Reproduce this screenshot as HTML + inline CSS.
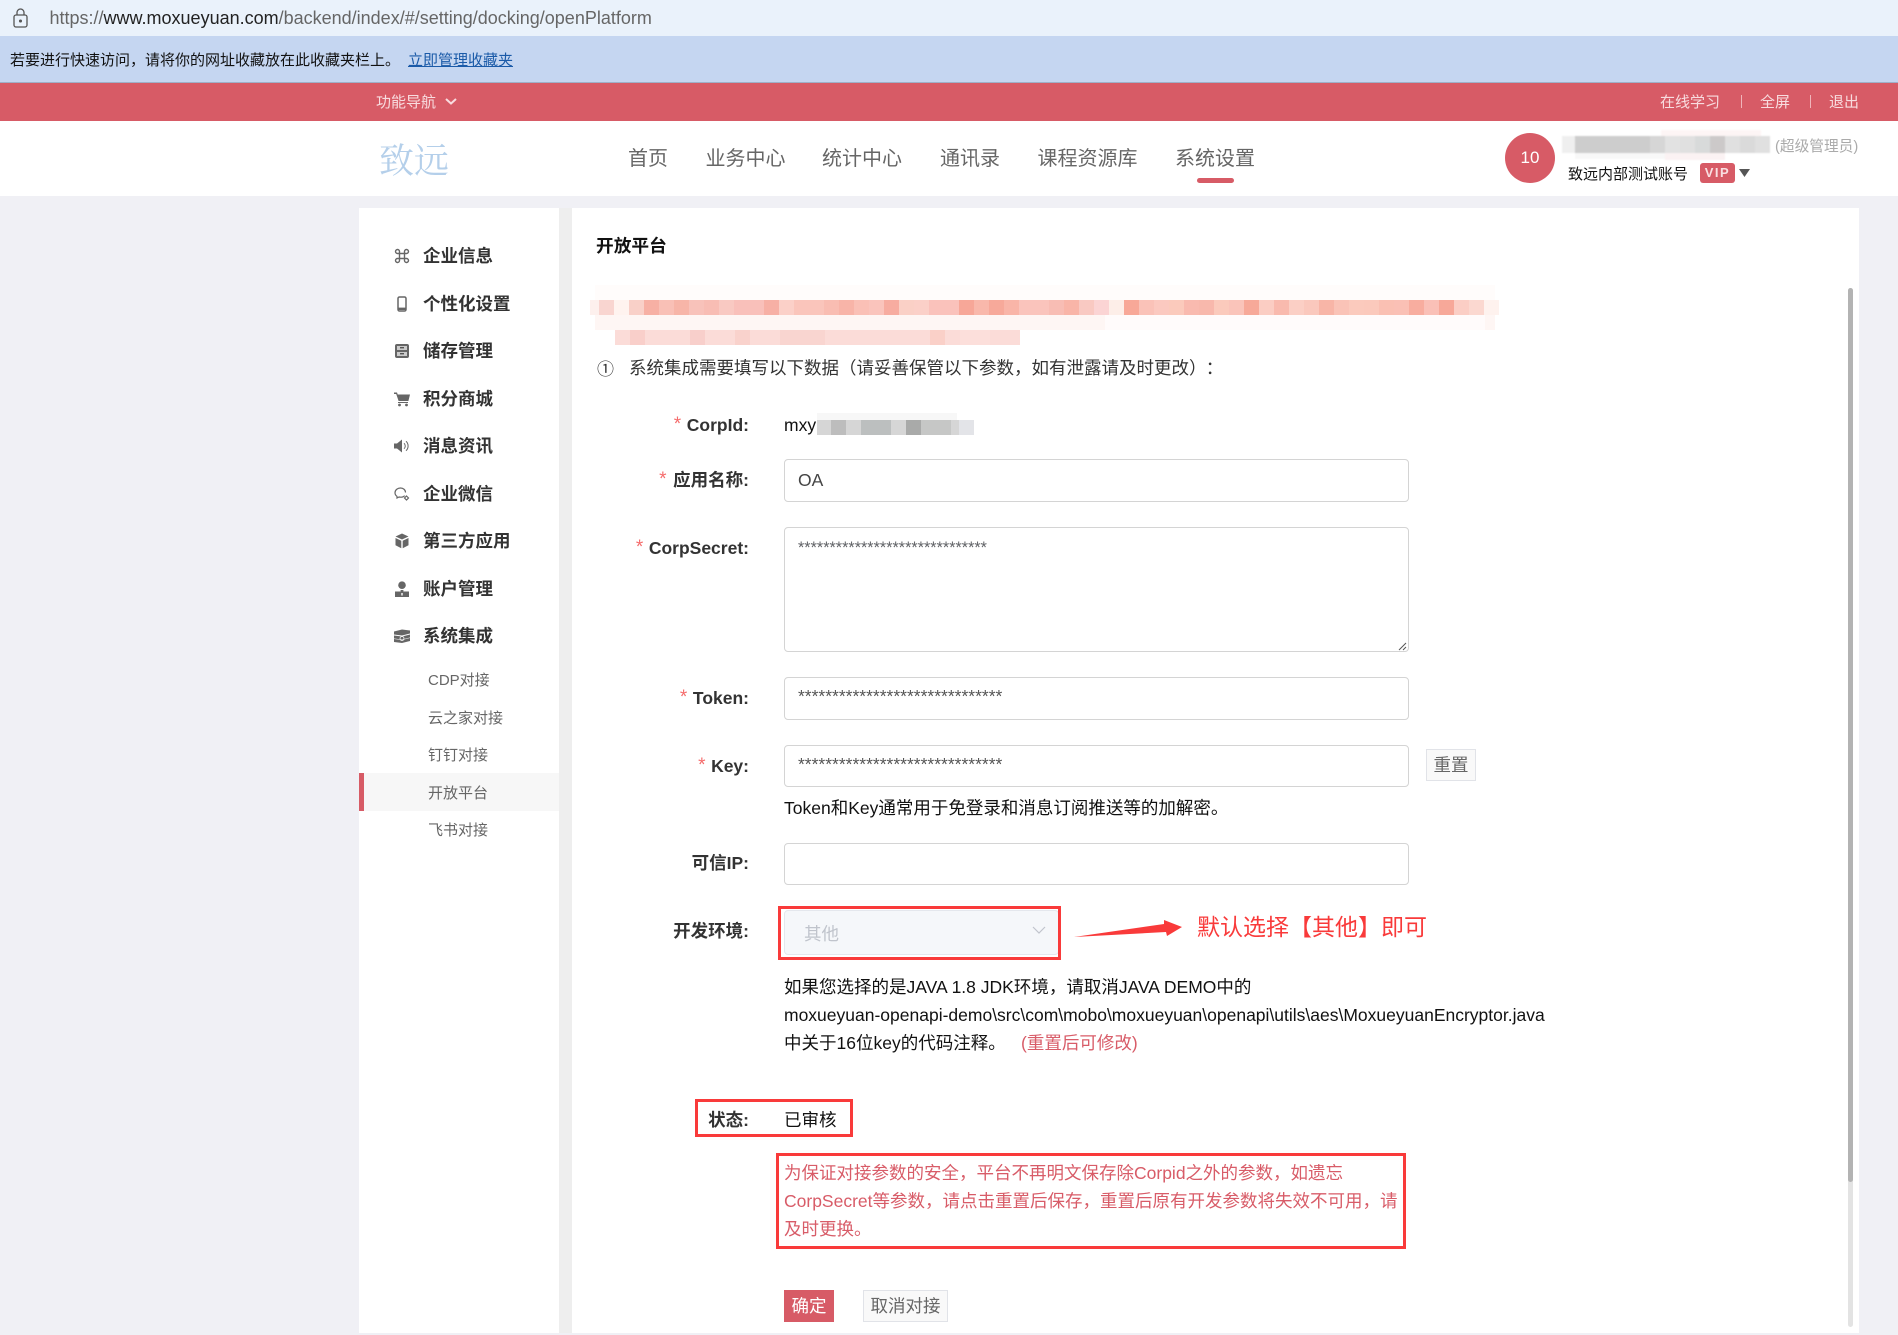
<!DOCTYPE html>
<html lang="zh"><head><meta charset="utf-8"><title>开放平台</title>
<style>
*{box-sizing:border-box;margin:0;padding:0}
html,body{width:1898px;height:1335px;overflow:hidden;background:#f0f0f5}
body{position:relative;font-family:"Liberation Sans","Noto Sans CJK SC",sans-serif;color:#000}
.a{position:absolute}
.t{position:absolute;white-space:nowrap;line-height:24px}
.m{font-size:17.5px;font-weight:700;color:#333;left:423px}
.s{font-size:15px;color:#666;left:428px}
.n{font-size:20px;color:#666;top:147px}
.l{font-size:17.5px;font-weight:700;color:#333;text-align:right;right:1149px}
.l i{position:absolute;font-style:normal;font-weight:400;color:#f56c6c;font-size:19px;top:0}
.v{font-size:17.5px;left:784px;color:#111}
.in{position:absolute;left:784px;width:625px;background:#fff;border:1.5px solid #d4d4d4;border-radius:4px}
.w{font-size:15px;color:#f8dcdf;top:90.5px}
.r{position:absolute;border:3px solid #f93a3a}
.ic{position:absolute;left:394px;width:16px;height:16px}
.e{font-size:17.5px;color:#d85c68;left:784px}
</style></head><body>

<!-- browser address bar -->
<div class="a" style="left:0;top:0;width:1898px;height:36px;background:#eaf2fb"></div>
<svg class="a" style="left:12px;top:8px" width="17" height="20" viewBox="0 0 17 20" fill="none" stroke="#555" stroke-width="1.3"><rect x="2" y="7" width="13" height="12" rx="2"/><path d="M5 7V4.5a3.5 3.5 0 0 1 7 0V7"/><circle cx="8.5" cy="13" r=".9" fill="#555"/></svg>
<div class="t" style="left:49.5px;top:6px;font-size:18px;color:#666">https://<span style="color:#222">www.moxueyuan.com</span>/backend/index/#/setting/docking/openPlatform</div>

<!-- favorites bar -->
<div class="a" style="left:0;top:36px;width:1898px;height:47px;background:#c5d6f1;border-bottom:1px solid #9fb0c8"></div>
<div class="t" style="left:10px;top:48.5px;font-size:15px;color:#111">若要进行快速访问，请将你的网址收藏放在此收藏夹栏上。</div>
<div class="t" style="left:408px;top:48.5px;font-size:15px;color:#1a5aa8;text-decoration:underline">立即管理收藏夹</div>

<!-- red bar -->
<div class="a" style="left:0;top:83px;width:1898px;height:38px;background:#d75b66"></div>
<div class="t w" style="left:376px">功能导航</div>
<svg class="a" style="left:444px;top:97px" width="14" height="9" viewBox="0 0 14 9" fill="none" stroke="#f8dcdf" stroke-width="2"><path d="M2 2l5 4.5L12 2"/></svg>
<div class="t w" style="left:1660px">在线学习</div>
<div class="a" style="left:1741px;top:95px;width:1px;height:13px;background:#f0b5bb"></div>
<div class="t w" style="left:1760px">全屏</div>
<div class="a" style="left:1810px;top:95px;width:1px;height:13px;background:#f0b5bb"></div>
<div class="t w" style="left:1829px">退出</div>

<!-- header -->
<div class="a" style="left:0;top:121px;width:1898px;height:75px;background:#fff"></div>
<div class="t" style="left:379px;top:146px;line-height:32px;font-size:35px;color:#b4cfea;font-family:'Liberation Serif','Noto Serif CJK SC',serif">致远</div>
<div class="t n" style="left:628px">首页</div>
<div class="t n" style="left:705.5px">业务中心</div>
<div class="t n" style="left:822px">统计中心</div>
<div class="t n" style="left:940px">通讯录</div>
<div class="t n" style="left:1037.5px">课程资源库</div>
<div class="t n" style="left:1175px">系统设置</div>
<div class="a" style="left:1197px;top:178px;width:37px;height:5px;border-radius:3px;background:#d75b66"></div>

<div class="a" style="left:1505px;top:133px;width:50px;height:50px;border-radius:50%;background:#d75b66;color:#fff;font-size:17px;line-height:50px;text-align:center">10</div>
<svg class="a" style="left:1561px;top:130px;filter:blur(.8px)" width="216" height="30" shape-rendering="crispEdges">
<rect x="1" y="6" width="208" height="17" fill="#efefef"/>
<rect x="14" y="6" width="75" height="17" fill="#cdcdcd"/><rect x="89" y="6" width="15" height="17" fill="#d6d6d6"/><rect x="104" y="6" width="15" height="17" fill="#e2e2e2"/><rect x="119" y="6" width="15" height="17" fill="#e0e0e0"/><rect x="134" y="6" width="15" height="17" fill="#d8dada"/><rect x="149" y="6" width="15" height="17" fill="#ccc9c9"/><rect x="164" y="6" width="15" height="17" fill="#e0e0e0"/><rect x="179" y="6" width="15" height="17" fill="#dadada"/><rect x="194" y="6" width="15" height="17" fill="#e0e0e0"/>
<rect x="100" y="0" width="100" height="6" fill="#fdf5f5"/><rect x="14" y="23" width="90" height="6" fill="#f8f8f8"/><rect x="104" y="23" width="60" height="7" fill="#fbf2f3"/>
</svg>
<div class="t" style="left:1775px;top:135px;font-size:14.7px;color:#aaa">(超级管理员)</div>
<div class="t" style="left:1568px;top:162.500px;font-size:15px;color:#111">致远内部测试账号</div>
<div class="a" style="left:1700px;top:163px;width:35px;height:20px;border-radius:3px;background:#d75b66;color:#f9dfe1;font-size:13px;font-weight:700;letter-spacing:1.5px;line-height:20px;text-align:center">VIP</div>
<svg class="a" style="left:1739px;top:169px" width="11" height="8"><path d="M0 0h11L5.500 8z" fill="#555"/></svg>

<!-- sidebar -->
<div class="a" style="left:359px;top:208px;width:200px;height:1125px;background:#fff"></div>
<div class="a" style="left:559px;top:208px;width:13px;height:1125px;background:#eee"></div>
<div class="a" style="left:359px;top:773px;width:200px;height:38px;background:#f7f7f7"></div>
<div class="a" style="left:359px;top:773px;width:5px;height:38px;background:#d75b66"></div>

<svg class="ic" style="top:248px" viewBox="0 0 16 16" fill="none" stroke="#666" stroke-width="1.4"><path d="M5.500 5.500h5v5h-5zM5.500 5.500V3.700A2 2 0 1 0 3.700 5.500H5.500M10.500 5.500V3.700A2 2 0 1 1 12.300 5.500H10.500M5.500 10.500V12.300A2 2 0 1 1 3.700 10.500H5.500M10.500 10.500V12.300A2 2 0 1 0 12.300 10.500H10.500"/></svg>
<svg class="ic" style="top:296px" viewBox="0 0 16 16" fill="none" stroke="#666" stroke-width="1.5"><rect x="4" y="1" width="8" height="14" rx="1.500"/><path d="M4 12.800h8" stroke-width="2.400"/></svg>
<svg class="ic" style="top:343px" viewBox="0 0 16 16"><rect x="1" y="1" width="14" height="14" rx="2" fill="#666"/><rect x="3" y="3" width="10" height="4" fill="#ccc"/><rect x="3" y="9" width="10" height="4" fill="#ccc"/><rect x="6" y="4" width="4" height="1.400" fill="#555"/><rect x="6" y="10" width="4" height="1.400" fill="#555"/></svg>
<svg class="ic" style="top:391px" viewBox="0 0 16 16" fill="#666"><path d="M0 1.500h3l.7 2H16l-1.600 6.500H4.600L2.200 3H0z"/><rect x="4" y="11" width="10" height="1"/><circle cx="5.500" cy="14" r="1.400"/><circle cx="12.500" cy="14" r="1.400"/></svg>
<svg class="ic" style="top:438px" viewBox="0 0 16 16" fill="#666"><path d="M0 5.500h3L8 1.500v13l-5-4H0z"/><path d="M10 5.300a3.500 3.500 0 0 1 0 5.400M12 3.300a6.300 6.300 0 0 1 0 9.400" fill="none" stroke="#666" stroke-width="1"/></svg>
<svg class="ic" style="top:486px" viewBox="0 0 16 16" fill="none" stroke="#666" stroke-width="1.200"><path d="M11.500 6.500C11.500 3.800 9.200 2 6.500 2S1 3.800 1 6.800c0 1.600.8 2.800 2 3.600L3 12l2-1c2 .4 4.500 0 5.600-1.400"/><path d="M12.500 10l2 2-2 2-2-2z"/></svg>
<svg class="ic" style="top:533px" viewBox="0 0 16 16" fill="#666"><path d="M8 .5l6.500 3L8 6.500l-6.500-3zM1.500 5l5.800 2.700v7.500l-5.800-3zM14.500 5l-5.800 2.700v7.500l5.800-3z"/></svg>
<svg class="ic" style="top:581px" viewBox="0 0 16 16" fill="#666"><circle cx="8" cy="4.200" r="3.800"/><path d="M1 10.500h14V16H1zM6.600 9h2.800v1.500H6.600z"/><rect x="7.300" y="12" width="1.400" height="2.500" fill="#fff"/></svg>
<svg class="ic" style="top:628px" viewBox="0 0 16 16" fill="#666"><path d="M0 3.500l8-2 8 1v3L8 7.500 0 6.500zM0 7.500l8 1 8-2v3l-8 2-8-1zM0 11l8 1 8-2v3l-8 2-8-1z"/><circle cx="8" cy="10.500" r="2" fill="none" stroke="#fff" stroke-width=".8"/></svg>

<div class="t m" style="top:244px">企业信息</div>
<div class="t m" style="top:292px">个性化设置</div>
<div class="t m" style="top:339px">储存管理</div>
<div class="t m" style="top:387px">积分商城</div>
<div class="t m" style="top:434px">消息资讯</div>
<div class="t m" style="top:482px">企业微信</div>
<div class="t m" style="top:529px">第三方应用</div>
<div class="t m" style="top:577px">账户管理</div>
<div class="t m" style="top:624px">系统集成</div>
<div class="t s" style="top:668.500px">CDP对接</div>
<div class="t s" style="top:706.500px">云之家对接</div>
<div class="t s" style="top:743.500px">钉钉对接</div>
<div class="t s" style="top:781.500px">开放平台</div>
<div class="t s" style="top:818.500px">飞书对接</div>

<!-- main -->
<div class="a" style="left:572px;top:208px;width:1287px;height:1125px;background:#fff"></div>
<div class="a" style="left:1848px;top:288px;width:5px;height:1039px;border-radius:3px;background:#e3e3e3"></div>
<div class="a" style="left:1848px;top:288px;width:5px;height:894px;border-radius:3px;background:#b3b3b3"></div>
<div class="t" style="left:596px;top:234px;font-size:17.700px;font-weight:700;color:#111">开放平台</div>

<!-- pixelated notice -->
<svg class="a" style="left:585px;top:285px" width="925" height="65" shape-rendering="crispEdges">
<rect x="10" y="0" width="900" height="15" fill="#fffcfb"/>
<rect x="10" y="30" width="900" height="15" fill="#fef6f4"/>
<rect x="520" y="30" width="380" height="15" fill="#fffbfb"/>
<rect x="5" y="15" width="9" height="15" fill="#fdf0ed"/>
<rect x="14" y="15" width="15" height="15" fill="#f9d5d0"/><rect x="29" y="15" width="15" height="15" fill="#fff3ef"/><rect x="44" y="15" width="15" height="15" fill="#f9d0c8"/><rect x="59" y="15" width="15" height="15" fill="#f7b0a4"/><rect x="74" y="15" width="15" height="15" fill="#f9c0b6"/><rect x="89" y="15" width="15" height="15" fill="#f7b5a8"/><rect x="104" y="15" width="15" height="15" fill="#f8c2ba"/><rect x="119" y="15" width="15" height="15" fill="#f8bdb4"/><rect x="134" y="15" width="15" height="15" fill="#f9c9c2"/><rect x="149" y="15" width="15" height="15" fill="#f9c0ba"/><rect x="164" y="15" width="15" height="15" fill="#f9c0ba"/><rect x="179" y="15" width="15" height="15" fill="#f7b0a5"/><rect x="194" y="15" width="15" height="15" fill="#fbd0c8"/><rect x="209" y="15" width="15" height="15" fill="#fac5bb"/><rect x="224" y="15" width="15" height="15" fill="#fac5bb"/><rect x="239" y="15" width="15" height="15" fill="#f9bdb2"/><rect x="254" y="15" width="15" height="15" fill="#f8b4a8"/><rect x="269" y="15" width="15" height="15" fill="#fac0b6"/><rect x="284" y="15" width="15" height="15" fill="#fac4bc"/><rect x="299" y="15" width="15" height="15" fill="#f7aca0"/><rect x="314" y="15" width="15" height="15" fill="#fad0c6"/><rect x="329" y="15" width="15" height="15" fill="#fbd0c8"/><rect x="344" y="15" width="15" height="15" fill="#fac2bb"/><rect x="359" y="15" width="15" height="15" fill="#fac2bb"/><rect x="374" y="15" width="15" height="15" fill="#f7a798"/><rect x="389" y="15" width="15" height="15" fill="#f9b8ab"/><rect x="404" y="15" width="15" height="15" fill="#f7a99a"/><rect x="419" y="15" width="15" height="15" fill="#f9b5a8"/><rect x="434" y="15" width="15" height="15" fill="#fac4bc"/><rect x="449" y="15" width="15" height="15" fill="#fac4bc"/>
<rect x="464" y="15" width="15" height="15" fill="#f8bdb4"/><rect x="479" y="15" width="15" height="15" fill="#f9b5a8"/><rect x="494" y="15" width="15" height="15" fill="#f9c9c2"/>
<g transform="translate(45 0)">
<rect x="464" y="15" width="15" height="15" fill="#fbd4d4"/><rect x="479" y="15" width="15" height="15" fill="#fdeee8"/><rect x="494" y="15" width="15" height="15" fill="#f8a898"/><rect x="509" y="15" width="15" height="15" fill="#fac2b8"/><rect x="524" y="15" width="15" height="15" fill="#fbc9c0"/><rect x="539" y="15" width="15" height="15" fill="#fbcabc"/><rect x="554" y="15" width="15" height="15" fill="#f9baaf"/><rect x="569" y="15" width="15" height="15" fill="#f8b8ac"/><rect x="584" y="15" width="15" height="15" fill="#fbcabc"/><rect x="599" y="15" width="15" height="15" fill="#fac4ba"/><rect x="614" y="15" width="15" height="15" fill="#f7a999"/><rect x="629" y="15" width="15" height="15" fill="#fbcdc3"/><rect x="644" y="15" width="15" height="15" fill="#f9baae"/><rect x="659" y="15" width="15" height="15" fill="#fbcfc5"/><rect x="674" y="15" width="15" height="15" fill="#fac8bd"/><rect x="689" y="15" width="15" height="15" fill="#f8b5a7"/><rect x="704" y="15" width="15" height="15" fill="#fac3b7"/><rect x="719" y="15" width="15" height="15" fill="#fbcabd"/><rect x="734" y="15" width="15" height="15" fill="#fbc9bc"/><rect x="749" y="15" width="15" height="15" fill="#fac0b3"/><rect x="764" y="15" width="15" height="15" fill="#fac0b5"/><rect x="779" y="15" width="15" height="15" fill="#f8ad9f"/><rect x="794" y="15" width="15" height="15" fill="#fac0b7"/><rect x="809" y="15" width="15" height="15" fill="#f7a899"/><rect x="824" y="15" width="15" height="15" fill="#fbcec5"/><rect x="839" y="15" width="15" height="15" fill="#fbd8d0"/><rect x="854" y="15" width="15" height="15" fill="#fef2ee"/>
</g>
<rect x="30" y="45" width="405" height="15" fill="#fbdcd8"/>
<rect x="45" y="45" width="15" height="15" fill="#f9cfca"/><rect x="105" y="45" width="15" height="15" fill="#f8cfcb"/><rect x="150" y="45" width="15" height="15" fill="#f9d2cc"/><rect x="195" y="45" width="45" height="15" fill="#f9d5d0"/><rect x="345" y="45" width="15" height="15" fill="#fad0c8"/><rect x="375" y="45" width="30" height="15" fill="#fcdfdb"/>
</svg>

<div class="t" style="left:597px;top:358px;font-size:17px;color:#333">①</div>
<div class="t" style="left:629px;top:356px;font-size:17.500px;color:#333">系统集成需要填写以下数据（请妥善保管以下参数，如有泄露请及时更改）<span style="margin-left:8px">：</span></div>

<div class="t l" style="top:413px"><i style="left:-13px">*</i>CorpId:</div>
<div class="t v" style="top:413px">mxy</div>
<svg class="a" style="left:816px;top:413px" width="160" height="24" shape-rendering="crispEdges">
<rect x="1" y="7" width="157" height="15" fill="#d6d6d6"/><rect x="1" y="0" width="140" height="7" fill="#f7f7f7"/>
<rect x="15" y="7" width="15" height="15" fill="#bdbdbd"/><rect x="45" y="7" width="30" height="15" fill="#bcbfbf"/><rect x="90" y="7" width="15" height="15" fill="#a9aaa9"/><rect x="105" y="7" width="30" height="15" fill="#c6c7c6"/><rect x="143" y="7" width="15" height="15" fill="#e3e4e8"/>
</svg>

<div class="t l" style="top:468px"><i style="left:-14px">*</i>应用名称:</div>
<div class="in" style="top:459px;height:43px"></div>
<div class="t v" style="left:798px;top:468px;color:#444">OA</div>

<div class="t l" style="top:536px"><i style="left:-13px">*</i>CorpSecret:</div>
<div class="in" style="top:527px;height:125px"></div>
<div class="t" style="left:798px;top:536px;font-size:16.200px;color:#606266">******************************</div>
<svg class="a" style="left:1398px;top:641px" width="10" height="10" fill="none" stroke="#555" stroke-width="1"><path d="M1 9l7-7M5 9l3-3"/></svg>

<div class="t l" style="top:686px"><i style="left:-13px">*</i>Token:</div>
<div class="in" style="top:677px;height:43px"></div>
<div class="t v" style="left:798px;top:684px;color:#555">******************************</div>

<div class="t l" style="top:754px"><i style="left:-13px">*</i>Key:</div>
<div class="in" style="top:745px;height:42px"></div>
<div class="t v" style="left:798px;top:752px;color:#555">******************************</div>
<div class="a" style="left:1426px;top:749px;width:50px;height:32px;background:#f9f9f9;border:1.500px solid #e1e3e8;color:#666;font-size:17.500px;line-height:31px;text-align:center">重置</div>
<div class="t v" style="top:796px">Token和Key通常用于免登录和消息订阅推送等的加解密。</div>

<div class="t l" style="top:851px">可信IP:</div>
<div class="in" style="top:843px;height:42px"></div>

<div class="t l" style="top:919px">开发环境:</div>
<div class="a" style="left:784px;top:910px;width:275px;height:45px;background:#f5f7fa;border:1.500px solid #e4e7ed;border-radius:4px"></div>
<div class="t" style="left:804px;top:922px;font-size:17.500px;color:#c0c4cc">其他</div>
<svg class="a" style="left:1032px;top:926px" width="14" height="9" fill="none" stroke="#c0c4cc" stroke-width="1.200"><path d="M1 1l6 6 6-6"/></svg>
<div class="r" style="left:778px;top:906px;width:283px;height:54px"></div>
<svg class="a" style="left:1070px;top:915px" width="115" height="25"><polygon points="4,22 94,9 94,5 112,12 97,21 96,17" fill="#f93a3a"/></svg>
<div class="t" style="left:1197px;top:914.500px;font-size:23px;color:#f93a3a">默认选择【其他】即可</div>

<div class="t v" style="top:975px">如果您选择的是JAVA 1.8 JDK环境，请取消JAVA DEMO中的</div>
<div class="t v" style="top:1003px">moxueyuan-openapi-demo\src\com\mobo\moxueyuan\openapi\utils\aes\MoxueyuanEncryptor.java</div>
<div class="t v" style="top:1031px">中关于16位key的代码注释。</div>
<div class="t" style="left:1021px;top:1031px;font-size:17.500px;color:#d85c68">(重置后可修改)</div>

<div class="t l" style="top:1108px">状态:</div>
<div class="t v" style="top:1108px">已审核</div>
<div class="r" style="left:695px;top:1099px;width:158px;height:38px"></div>

<div class="t e" style="top:1161px">为保证对接参数的安全，平台不再明文保存除Corpid之外的参数，如遗忘</div>
<div class="t e" style="top:1189px">CorpSecret等参数，请点击重置后保存，重置后原有开发参数将失效不可用，请</div>
<div class="t e" style="top:1217px">及时更换。</div>
<div class="r" style="left:776px;top:1153px;width:630px;height:96px"></div>

<div class="a" style="left:784px;top:1290px;width:50px;height:32px;background:#d75b66;color:#fff;font-size:17.500px;line-height:33px;text-align:center">确定</div>
<div class="a" style="left:863px;top:1290px;width:85px;height:32px;background:#f9f9f9;border:1.500px solid #e1e3e8;color:#666;font-size:17.500px;line-height:31px;text-align:center">取消对接</div>
</body></html>
